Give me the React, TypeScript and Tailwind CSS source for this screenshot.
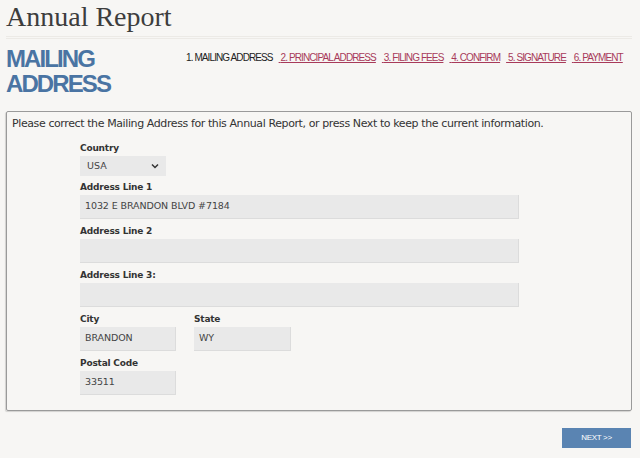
import React from "react";

const steps = [
  "2. PRINCIPAL ADDRESS",
  "3. FILING FEES",
  "4. CONFIRM",
  "5. SIGNATURE",
  "6. PAYMENT",
];

function Label({ children }: { children: React.ReactNode }) {
  return (
    <div className="text-[9px] font-bold leading-[12px] text-[#333] mb-[2px] tracking-[-0.2px] whitespace-nowrap">
      {children}
    </div>
  );
}

function Input({ value, w }: { value?: string; w: string }) {
  return (
    <div
      className={`${w} h-[24px] bg-[#e9e9e9] border-b border-r border-[#dcdcdc] flex items-center pl-[5px] text-[9.5px] text-[#444] tracking-[-0.1px]`}
    >
      {value}
    </div>
  );
}

export default function App() {
  return (
    <div
      className="w-[640px] h-[458px] bg-[#f7f6f4] overflow-hidden px-[6px]"
      style={{ fontFamily: '"DejaVu Sans", sans-serif' }}
    >
      <div
        className="pt-[2px] text-[28px] leading-[30px] text-[#3d3d3d]"
        style={{ fontFamily: '"Liberation Serif", serif' }}
      >
        Annual Report
      </div>
      <div className="mt-[4px] h-[3px] border-t border-b border-[#eceae6] w-[626px]" />
      <div className="flex mt-[7px] h-[65px]">
        <div
          className="w-[180px] text-[24px] leading-[25px] font-bold text-[#4a74a3] tracking-[-1.9px]"
          style={{ fontFamily: '"Liberation Sans", Arial, sans-serif' }}
        >
          MAILING
          <br />
          ADDRESS
        </div>
        <div
          className="flex text-[10px] pt-[4px] tracking-[-0.9px] whitespace-nowrap"
          style={{ fontFamily: '"Liberation Sans", Arial, sans-serif' }}
        >
          <span className="text-[#222]">1. MAILING ADDRESS</span>
          {steps.map((s) => (
            <a key={s} href="#" className="text-[#a83a5a] underline ml-[6px]">
              &nbsp;{s}
            </a>
          ))}
        </div>
      </div>
      <div className="w-[626px] h-[300px] border border-[#9a9a9a] rounded-[2px] shadow-[-1px_1px_1px_rgba(0,0,0,0.15)] px-[5px] pt-[5px]">
        <div className="text-[11px] leading-[14px] text-[#333] tracking-[-0.4px] whitespace-nowrap">
          Please correct the Mailing Address for this Annual Report, or press Next to keep the current information.
        </div>
        <div className="ml-[68px] mt-[11px]">
          <Label>Country</Label>
          <div className="w-[86px] h-[20px] bg-[#e9e9e9] flex items-center justify-between px-[7px] text-[9.5px] text-[#444]">
            <span>USA</span>
            <svg width="8" height="6" viewBox="0 0 8 6">
              <path d="M1 1.5 L4 4.5 L7 1.5" stroke="#333" strokeWidth="1.5" fill="none" />
            </svg>
          </div>
          <div className="mt-[5px]">
            <Label>Address Line 1</Label>
            <Input value="1032 E BRANDON BLVD #7184" w="w-[439px]" />
          </div>
          <div className="mt-[6px]">
            <Label>Address Line 2</Label>
            <Input w="w-[439px]" />
          </div>
          <div className="mt-[6px]">
            <Label>Address Line 3:</Label>
            <Input w="w-[439px]" />
          </div>
          <div className="mt-[6px] flex gap-[18px]">
            <div>
              <Label>City</Label>
              <Input value="BRANDON" w="w-[96px]" />
            </div>
            <div>
              <Label>State</Label>
              <Input value="WY" w="w-[97px]" />
            </div>
          </div>
          <div className="mt-[6px]">
            <Label>Postal Code</Label>
            <Input value="33511" w="w-[96px]" />
          </div>
        </div>
      </div>
      <div className="flex justify-end mt-[17px] pr-[3px]">
        <div
          className="w-[69px] h-[20px] bg-[#5a84b2] text-white text-[8px] flex items-center justify-center tracking-[-0.3px]"
          style={{ fontFamily: '"Liberation Sans", Arial, sans-serif' }}
        >
          NEXT &gt;&gt;
        </div>
      </div>
    </div>
  );
}
